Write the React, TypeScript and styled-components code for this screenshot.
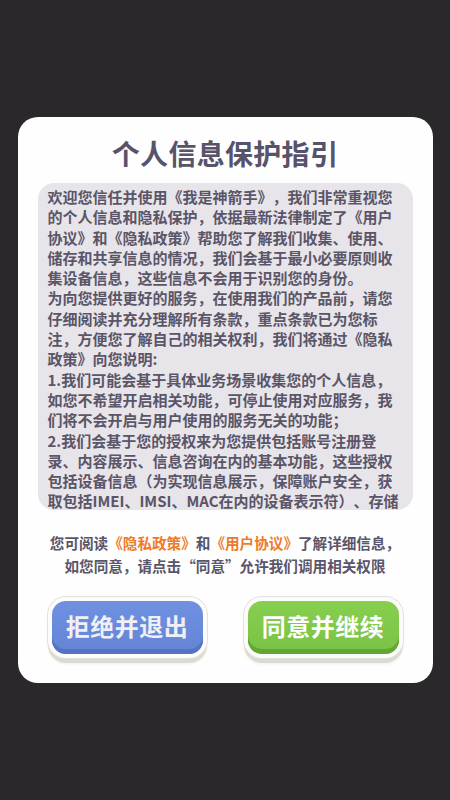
import React from 'react';
import styled, { createGlobalStyle } from 'styled-components';

const GlobalStyle = createGlobalStyle`
	html, body {
		margin: 0;
		padding: 0;
		background: #2b282c;
	}
	body {
		font-family: "Noto Sans CJK SC", "Noto Sans", sans-serif;
	}
`;

const Screen = styled.div`
	width: 450px;
	height: 800px;
	background: #2b282c;
	overflow: hidden;
	padding-top: 117px;
	box-sizing: border-box;
`;

const Card = styled.section`
	width: 415px;
	margin: 0 auto;
	background: #fefefe;
	border-radius: 20px;
	padding: 18px 20px 25px;
	box-sizing: border-box;
	display: flex;
	flex-direction: column;
	align-items: stretch;
`;

const Title = styled.h1`
	margin: 0;
	font-size: 28px;
	line-height: 36px;
	font-weight: 700;
	color: #57536b;
	text-align: center;
	letter-spacing: 0.3px;
`;

const TextBox = styled.div`
	margin-top: 12px;
	height: 327px;
	box-sizing: border-box;
	padding: 4px 12px 0 10px;
	background: #e7e4ea;
	border-radius: 16px;
	overflow: hidden;
	color: #5a5567;
	font-size: 15px;
	line-height: 20.3px;
	font-weight: 700;
	text-spacing-trim: space-all;
`;

const Paragraph = styled.p`
	margin: 0;
`;

const Notice = styled.p`
	margin: 21px 0 0;
	font-size: 14.6px;
	line-height: 23px;
	font-weight: 700;
	color: #59556a;
	text-align: center;
	text-spacing-trim: space-all;
`;

const Highlight = styled.span`
	color: #ee7a2a;
`;

const ButtonRow = styled.div`
	margin-top: 20px;
	display: flex;
	justify-content: center;
	gap: 37px;
`;

const tones = {
	blue: {
		top: '#6f91e0',
		bottom: '#6484d6',
		edge: '#5473c3',
		text: '#eef0f6',
	},
	green: {
		top: '#88cf50',
		bottom: '#78c244',
		edge: '#62a636',
		text: '#ffffff',
	},
};

const ActionButton = styled.button`
	width: 159px;
	height: 61px;
	padding: 4px;
	border: none;
	border-radius: 18px;
	background: #fcfcfa;
	box-shadow: 0 0 0 1px #e3e1db, 0 5px 0 #dddbd1, 0 6px 3px rgba(0, 0, 0, 0.06);
	cursor: pointer;
	box-sizing: border-box;
`;

const Face = styled.span<{ $tone: 'blue' | 'green' }>`
	display: flex;
	align-items: center;
	justify-content: center;
	height: 100%;
	box-sizing: border-box;
	padding-bottom: 4px;
	border-radius: 14px;
	background: linear-gradient(
		${(p) => tones[p.$tone].top},
		${(p) => tones[p.$tone].bottom}
	);
	box-shadow: inset 0 -5px 0 ${(p) => tones[p.$tone].edge};
	color: ${(p) => tones[p.$tone].text};
	font-family: "Noto Sans CJK SC", sans-serif;
	font-size: 24px;
	font-weight: 700;
	letter-spacing: 0.5px;
`;

function PrivacyGuide() {
	return (
		<Screen>
			<GlobalStyle />
			<Card>
				<Title>个人信息保护指引</Title>
				<TextBox>
					<Paragraph>
						欢迎您信任并使用《我是神箭手》，我们非常重视您的个人信息和隐私保护，依据最新法律制定了《用户协议》和《隐私政策》帮助您了解我们收集、使用、储存和共享信息的情况，我们会基于最小必要原则收集设备信息，这些信息不会用于识别您的身份。
					</Paragraph>
					<Paragraph>
						为向您提供更好的服务，在使用我们的产品前，请您仔细阅读并充分理解所有条款，重点条款已为您标注，方便您了解自己的相关权利，我们将通过《隐私政策》向您说明:
					</Paragraph>
					<Paragraph>
						1.我们可能会基于具体业务场景收集您的个人信息，如您不希望开启相关功能，可停止使用对应服务，我们将不会开启与用户使用的服务无关的功能；
					</Paragraph>
					<Paragraph>
						2.我们会基于您的授权来为您提供包括账号注册登录、内容展示、信息咨询在内的基本功能，这些授权包括设备信息（为实现信息展示，保障账户安全，获取包括IMEI、IMSI、MAC在内的设备表示符）、存储权限（用于缓存图片及内容）等；
					</Paragraph>
					<Paragraph>
						3.未经您的同意，我们不会将您的个人信息共享给第三方。
					</Paragraph>
				</TextBox>
				<Notice>
					您可阅读<Highlight>《隐私政策》</Highlight>和<Highlight>《用户协议》</Highlight>了解详细信息，
					<br />
					如您同意，请点击“同意”允许我们调用相关权限
				</Notice>
				<ButtonRow>
					<ActionButton>
						<Face $tone="blue">拒绝并退出</Face>
					</ActionButton>
					<ActionButton>
						<Face $tone="green">同意并继续</Face>
					</ActionButton>
				</ButtonRow>
			</Card>
		</Screen>
	);
}

export default PrivacyGuide;
